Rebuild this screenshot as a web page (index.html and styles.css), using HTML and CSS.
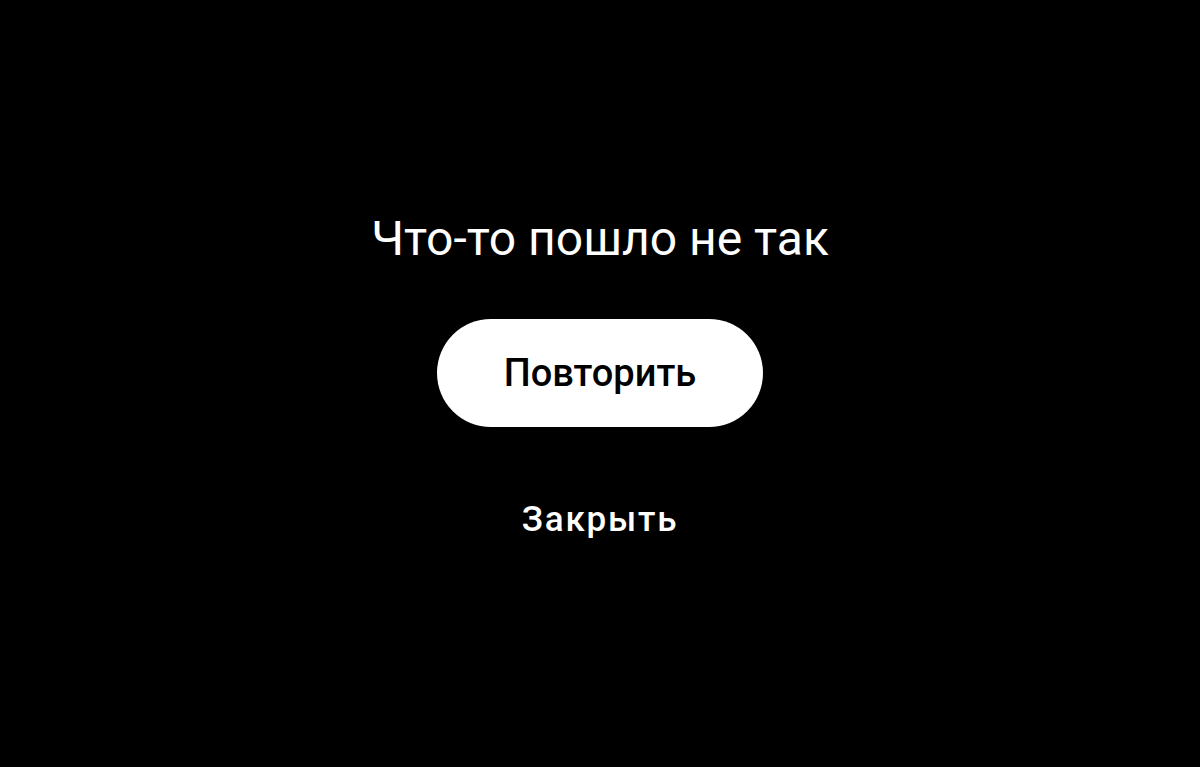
FILE: index.html
```html
<!DOCTYPE html>
<html lang="ru">
<head>
<meta charset="utf-8">
<link rel="stylesheet" href="styles.css">
</head>
<body>
<main class="screen">
  <h1 class="title">Что-то пошло не так</h1>
  <button class="retry">Повторить</button>
  <button class="close">Закрыть</button>
</main>
</body>
</html>
```

FILE: styles.css
```css
html, body {
  margin: 0;
  padding: 0;
  background: #000;
  height: 100%;
}
.screen {
  height: 767px;
  display: flex;
  flex-direction: column;
  align-items: center;
  font-family: Roboto, "Noto Sans", sans-serif;
  color: #fff;
}
.title {
  margin: 209px 0 0;
  font-size: 48px;
  font-weight: 400;
  line-height: 60px;
}
.retry {
  margin-top: 50px;
  width: 326px;
  height: 108px;
  border: none;
  border-radius: 54px;
  background: #fff;
  color: #000;
  font-family: Roboto, sans-serif;
  font-size: 38px;
  font-weight: 500;
  padding: 0;
}
.close {
  margin-top: 73px;
  background: none;
  border: none;
  color: #fff;
  font-family: Roboto, sans-serif;
  font-size: 35px;
  font-weight: 500;
  letter-spacing: 1.8px;
  padding: 0;
  line-height: 40px;
}
```
